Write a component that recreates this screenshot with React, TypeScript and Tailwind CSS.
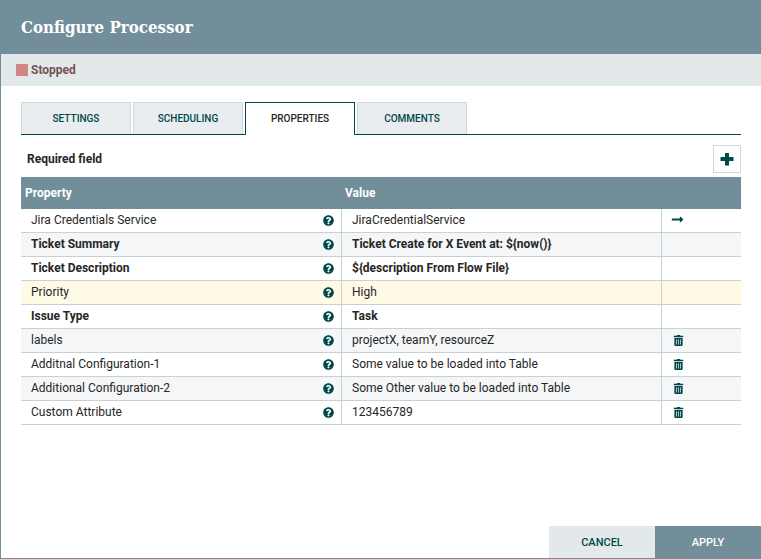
import { FaLongArrowAltRight, FaQuestionCircle, FaTrashAlt } from 'react-icons/fa';

type Row = { name: string; value: string; bold?: boolean; action?: 'arrow' | 'trash'; active?: boolean };

const TABS = ['SETTINGS', 'SCHEDULING', 'PROPERTIES', 'COMMENTS'];

const ROWS: Row[] = [
  { name: 'Jira Credentials Service', value: 'JiraCredentialService', action: 'arrow' },
  { name: 'Ticket Summary', value: 'Ticket Create for X Event at: ${now()}', bold: true },
  { name: 'Ticket Description', value: '${description From Flow File}', bold: true },
  { name: 'Priority', value: 'High', active: true },
  { name: 'Issue Type', value: 'Task', bold: true },
  { name: 'labels', value: 'projectX, teamY, resourceZ', action: 'trash' },
  { name: 'Additnal Configuration-1', value: 'Some value to be loaded into Table', action: 'trash' },
  { name: 'Additional Configuration-2', value: 'Some Other value to be loaded into Table', action: 'trash' },
  { name: 'Custom Attribute', value: '123456789', action: 'trash' },
];

export default function App() {
  return (
    <div className="flex h-[559px] w-[761px] flex-col overflow-hidden border-b border-l border-[#728e9b] bg-white font-['Roboto',sans-serif] text-xs text-[#262626]">
      {/* header */}
      <div className="flex h-[54px] shrink-0 items-center bg-[#728e9b] pl-5 font-['DejaVu_Serif',serif] text-[16.8px] font-bold text-white [font-stretch:condensed]">
        Configure Processor
      </div>
      <div className="flex h-[32px] shrink-0 items-center gap-[3px] bg-[#e3e8eb] pl-[15px]">
        <span className="h-3 w-3 bg-[#d18686]" />
        <span className="font-bold text-[#775351]">Stopped</span>
      </div>

      <div className="px-5 pt-4">
        {/* tabs */}
        <div className="flex h-[33px] gap-[2px] border-b border-[#004849]">
          {TABS.map((tab) =>
            tab === 'PROPERTIES' ? (
              <div
                key={tab}
                className="flex h-[33px] w-[110px] items-center justify-center border border-b-0 border-[#004849] bg-white text-[10px] font-medium text-[#262626]"
              >
                {tab}
              </div>
            ) : (
              <div
                key={tab}
                className="flex h-[32px] w-[110px] items-center justify-center border border-b-0 border-[#ccdadb] bg-[#e9edf0] text-[10px] font-medium text-[#004849]"
              >
                {tab}
              </div>
            ),
          )}
        </div>

        <div className="mt-[10px] flex h-[28px] items-center justify-between">
          <span className="pl-[6px] font-bold text-[#262626]">Required field</span>
          <button className="flex h-[28px] w-[28px] items-center justify-center border border-[#ccdadb] text-[#004849]">
            <svg width="14" height="14" viewBox="0 0 14 14" fill="currentColor">
              <path d="M5 1h4v4h4.500v4H9v4.500H5V9H.5V5H5z" />
            </svg>
          </button>
        </div>

        {/* table */}
        <div className="mt-1 w-[720px]">
          <div className="flex h-[32px] items-center bg-[#728e9b] font-bold text-white">
            <div className="w-[324px] pl-1">Property</div>
            <div>Value</div>
          </div>
          {ROWS.map((row, idx) => {
            const bg = row.active ? 'bg-[#fffae6]' : idx % 2 === 1 ? 'bg-[#f4f6f7]' : 'bg-white';
            return (
              <div key={row.name} className={`flex h-[24px] border-b border-[#c7d2d7] ${bg}`}>
                <div className="flex w-[321px] items-center justify-between border-r border-[#c7d2d7] pr-[7px] pb-px pl-[10px]">
                  <span className={row.bold ? 'font-bold' : ''}>{row.name}</span>
                  <FaQuestionCircle size={11} className="text-[#004849]" />
                </div>
                <div className={`flex w-[320px] items-center border-r border-[#c7d2d7] pb-px pl-[10px] ${row.bold ? 'font-bold' : ''}`}>
                  {row.value}
                </div>
                <div className="flex flex-1 items-center pb-px pl-[10px] text-[#004849]">
                  {row.action === 'arrow' && <FaLongArrowAltRight size={13} className="-mt-[2px] -ml-[1px]" />}
                  {row.action === 'trash' && <FaTrashAlt size={11} className="ml-[1px]" />}
                </div>
              </div>
            );
          })}
        </div>
      </div>

      {/* footer */}
      <div className="mt-auto flex justify-end text-[11px] font-medium">
        <button className="flex h-[32px] w-[106px] items-center justify-center bg-[#e3e8eb] pt-[2px] text-[#004849]">CANCEL</button>
        <button className="flex h-[32px] w-[106px] items-center justify-center bg-[#728e9b] pt-[2px] text-white">APPLY</button>
      </div>
    </div>
  );
}
